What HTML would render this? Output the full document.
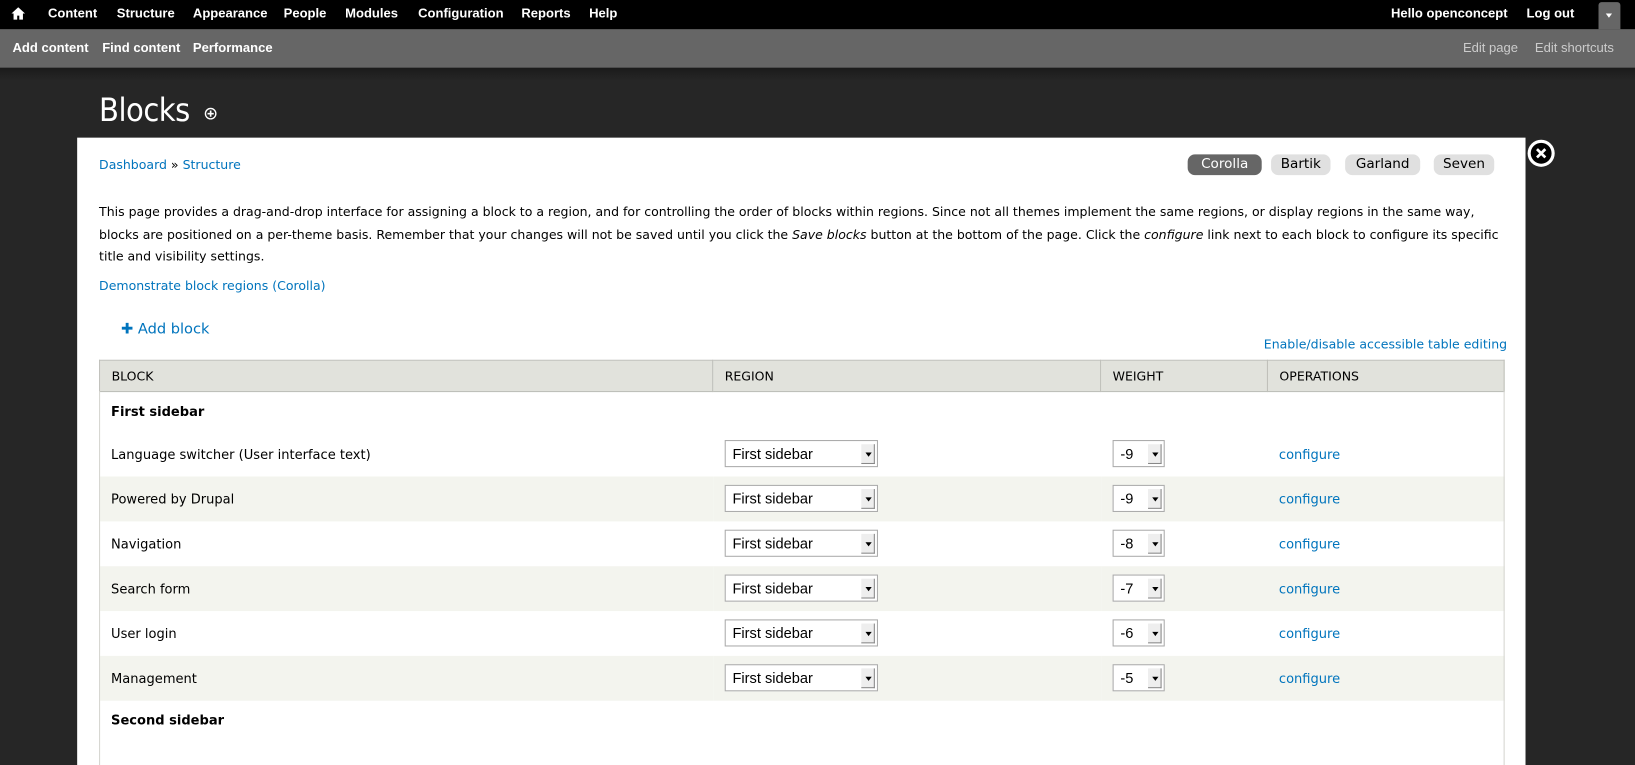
<!DOCTYPE html>
<html><head><meta charset="utf-8"><style>
*{box-sizing:border-box;margin:0;padding:0}
body{width:1635px;height:734px;overflow:hidden;background:#262626;font-family:"DejaVu Sans","Liberation Sans",sans-serif;font-size:12px;color:#000;position:relative}
#w{position:absolute;left:0;top:0;width:1568px;height:704px;transform:scale(1.04273);transform-origin:0 0}
a{color:#0074bd;text-decoration:none}
#tb{position:absolute;left:0;top:0;width:1568px;height:28px;background:#000;color:#fff;font-weight:bold;font-size:12.5px;font-family:"Liberation Sans",sans-serif}
#tb span{position:absolute;top:6px}
#sc{position:absolute;left:0;top:28px;width:1568px;height:37px;background:#666;color:#fff;font-size:12.5px;font-weight:bold;font-family:"Liberation Sans",sans-serif}
#sc span{position:absolute;top:11px}
#dark{position:absolute;left:0;top:65px;width:1568px;height:70px;background:linear-gradient(#1a1a1a,#262626 12px)}
h1{position:absolute;left:95px;top:88px;color:#fff;font-size:31px;font-weight:normal;font-family:"DejaVu Sans Condensed","DejaVu Sans",sans-serif;letter-spacing:-0.5px}
#panel{position:absolute;left:74px;top:132px;width:1389px;height:602px;background:#fff}
.tab{position:absolute;top:148px;height:20px;border-radius:7px;background:#e0e0e0;font-size:13px;text-align:center;line-height:20px;color:#000}
table{position:absolute;left:95px;top:345px;width:1348px;border-collapse:collapse}
th{background:#e1e2dc;border:1px solid #bebfb9;height:30px;text-align:left;font-weight:normal;padding-left:11px;font-size:12px}
td{height:43px;padding-left:11px;font-size:12.5px}
tr.s td{background:#f3f4ee}
.sel{display:inline-block;position:relative;height:26px;border:1px solid #aaa;background:#fff;font-family:"Liberation Sans",sans-serif;font-size:14px;line-height:24px;padding-left:7px;vertical-align:middle}
.sel:after{content:"";position:absolute;right:2px;top:3px;width:12px;height:18px;background:#eee;border-right:1px solid #888;border-bottom:1px solid #888}
.sel i{position:absolute;right:5px;top:11px;border:3px solid transparent;border-top:4px solid #000;z-index:1}
</style></head><body><div id="w">
<div id="tb">
<svg style="position:absolute;left:11px;top:7px" width="13" height="12" viewBox="0 0 13 12"><path d="M6.5 0L0 6h2v6h3.5V8h2v4H11V6h2z" fill="#fff"/></svg>
<span style="left:46px">Content</span><span style="left:112px">Structure</span><span style="left:185px">Appearance</span><span style="left:272px">People</span><span style="left:331px">Modules</span><span style="left:401px">Configuration</span><span style="left:500px">Reports</span><span style="left:565px">Help</span>
<span style="left:1334px">Hello openconcept</span><span style="left:1464px">Log out</span>
<div style="position:absolute;left:1533px;top:2px;width:21px;height:26px;background:#666;border-radius:3px 3px 0 0"><div style="position:absolute;left:7px;top:11px;border:3px solid transparent;border-top:4px solid #fff"></div></div>
</div>
<div id="sc"><span style="left:12px">Add content</span><span style="left:98px">Find content</span><span style="left:185px">Performance</span>
<span style="left:1403px;font-weight:normal;color:#ccc">Edit page</span><span style="left:1472px;font-weight:normal;color:#ccc">Edit shortcuts</span></div>
<div id="dark"></div>
<h1>Blocks</h1>
<svg style="position:absolute;left:196px;top:103px" width="12" height="12"><circle cx="6" cy="6" r="5" fill="none" stroke="#fff" stroke-width="1.3"/><path d="M6 3v6M3 6h6" stroke="#fff" stroke-width="1.6"/></svg>
<div id="panel"></div>
<svg style="position:absolute;left:1464px;top:133px" width="28" height="28"><circle cx="14" cy="14" r="13" fill="#fff"/><circle cx="14" cy="14" r="10" fill="#000"/><path d="M10 10l8 8M18 10l-8 8" stroke="#fff" stroke-width="2.6"/></svg>
<div style="position:absolute;left:95px;top:151px"><a>Dashboard</a> » <a>Structure</a></div>
<div class="tab" style="left:1139px;width:71px;background:#666;color:#fff">Corolla</div>
<div class="tab" style="left:1219px;width:57px">Bartik</div>
<div class="tab" style="left:1290px;width:72px">Garland</div>
<div class="tab" style="left:1375px;width:58px">Seven</div>
<div style="position:absolute;left:95px;top:193px;width:1350px;line-height:21.5px;font-size:12px">This page provides a drag-and-drop interface for assigning a block to a region, and for controlling the order of blocks within regions. Since not all themes implement the same regions, or display regions in the same way, blocks are positioned on a per-theme basis. Remember that your changes will not be saved until you click the <em>Save blocks</em> button at the bottom of the page. Click the <em>configure</em> link next to each block to configure its specific title and visibility settings.</div>
<a style="position:absolute;left:95px;top:267px">Demonstrate block regions (Corolla)</a>
<a style="position:absolute;left:116px;top:308px;font-size:14px"><b>✚</b> Add block</a>
<a style="position:absolute;left:1212px;top:323px">Enable/disable accessible table editing</a>
<table>
<tr><th style="width:588px">BLOCK</th><th style="width:372px">REGION</th><th style="width:160px">WEIGHT</th><th>OPERATIONS</th></tr>
<tr><td colspan="4" style="font-weight:bold;height:38px">First sidebar</td></tr>
<tr><td>Language switcher (User interface text)</td><td><span class="sel" style="width:147px">First sidebar<i></i></span></td><td><span class="sel" style="width:50px">-9<i></i></span></td><td><a>configure</a></td></tr>
<tr class="s"><td>Powered by Drupal</td><td><span class="sel" style="width:147px">First sidebar<i></i></span></td><td><span class="sel" style="width:50px">-9<i></i></span></td><td><a>configure</a></td></tr>
<tr><td>Navigation</td><td><span class="sel" style="width:147px">First sidebar<i></i></span></td><td><span class="sel" style="width:50px">-8<i></i></span></td><td><a>configure</a></td></tr>
<tr class="s"><td>Search form</td><td><span class="sel" style="width:147px">First sidebar<i></i></span></td><td><span class="sel" style="width:50px">-7<i></i></span></td><td><a>configure</a></td></tr>
<tr><td>User login</td><td><span class="sel" style="width:147px">First sidebar<i></i></span></td><td><span class="sel" style="width:50px">-6<i></i></span></td><td><a>configure</a></td></tr>
<tr class="s"><td>Management</td><td><span class="sel" style="width:147px">First sidebar<i></i></span></td><td><span class="sel" style="width:50px">-5<i></i></span></td><td><a>configure</a></td></tr>
<tr><td colspan="4" style="font-weight:bold;height:38px">Second sidebar</td></tr>
</table>
<div style="position:absolute;left:95px;top:375px;width:1px;height:359px;background:#d5d5d0"></div>
<div style="position:absolute;left:1442px;top:375px;width:1px;height:359px;background:#d5d5d0"></div>
</div></body></html>
